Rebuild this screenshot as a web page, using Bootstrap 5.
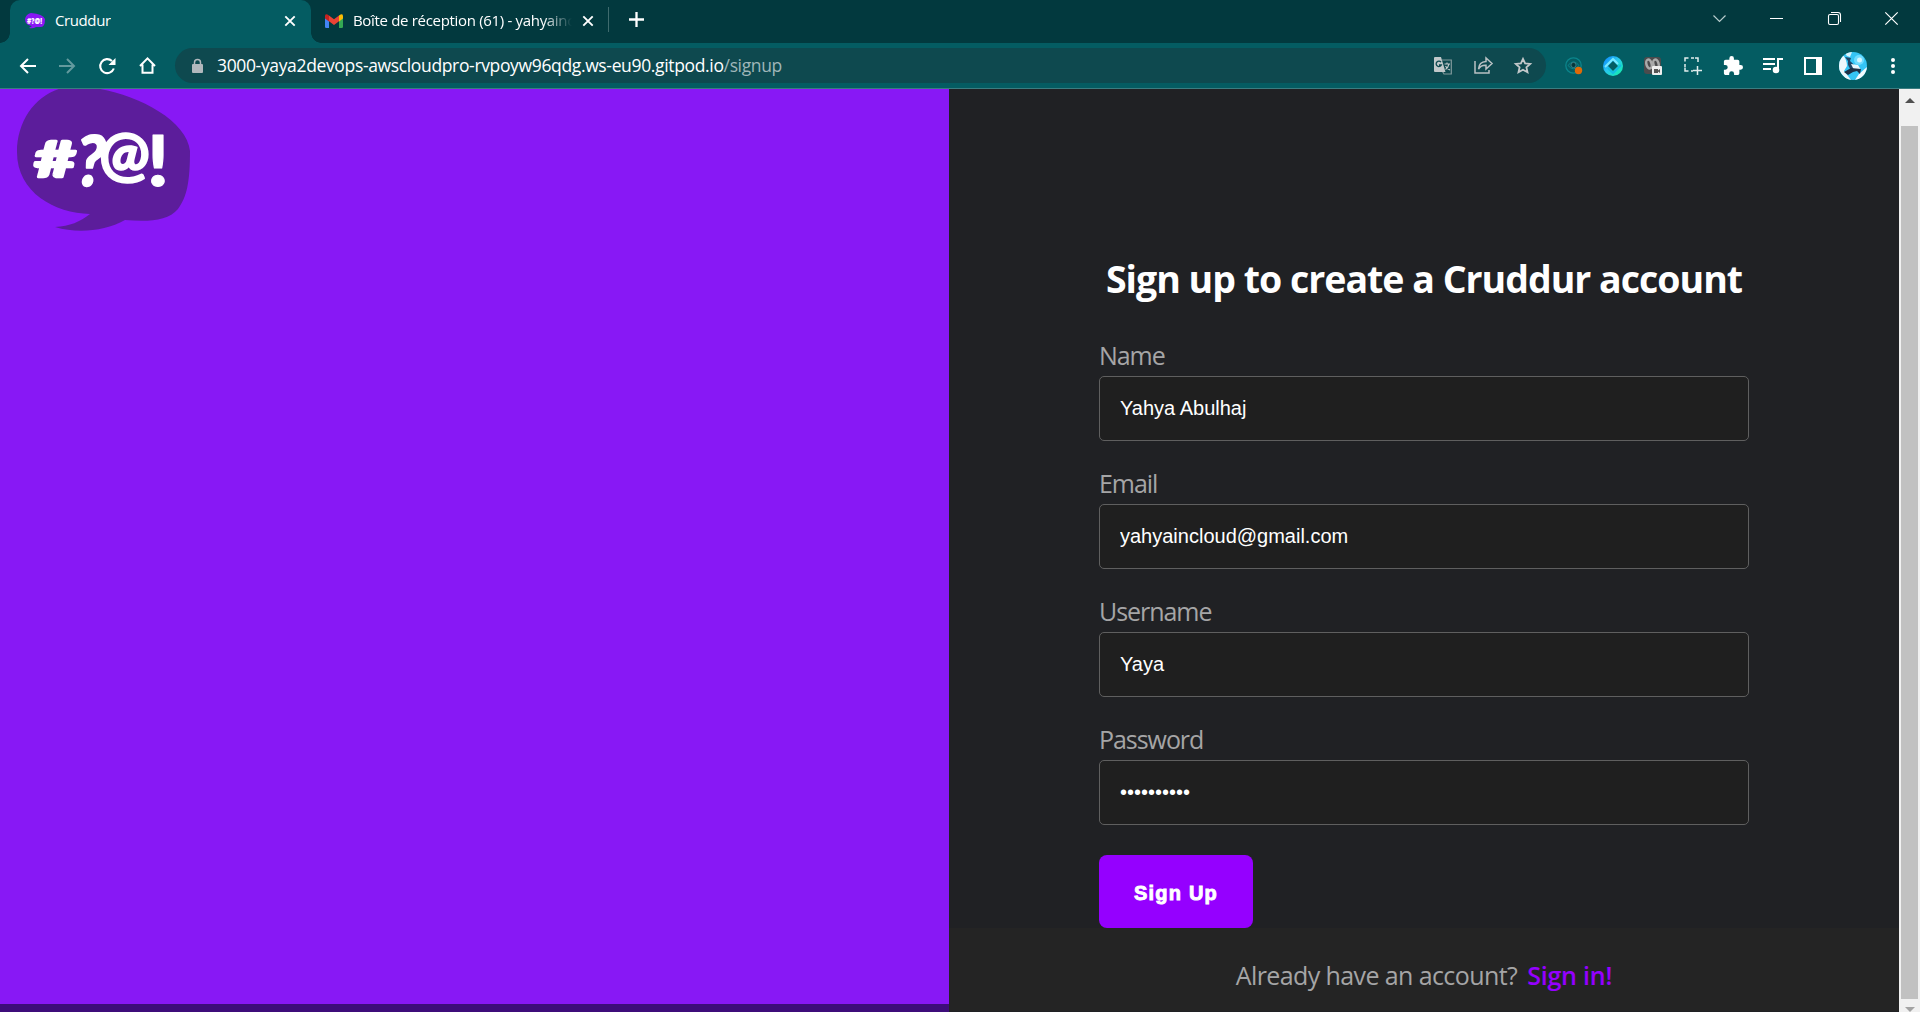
<!DOCTYPE html>
<html lang="en" data-bs-theme="dark">
<head>
<meta charset="utf-8">
<title>Cruddur</title>
<link href="https://cdn.jsdelivr.net/npm/bootstrap@5.3.0/dist/css/bootstrap.min.css" rel="stylesheet">
<style>
  html, body { height: 1012px; margin: 0; overflow: hidden; }
  body { font-family: "Open Sans", "Noto Sans", sans-serif; background: #202124; color: #fff; }
  svg { display: block; flex: none; overflow: visible; }
  .tabstrip { height: 43px; background: #02393e; }
  .tab-active { position: relative; width: 301px; height: 43px; margin-left: 10px; background: #045c62; border-radius: 10px 10px 0 0; padding-left: 15px; padding-right: 14px; padding-bottom: 1px; }
  .tab-active::before, .tab-active::after { content: ""; position: absolute; bottom: 0; width: 10px; height: 10px; }
  .tab-active::before { left: -10px; background: radial-gradient(circle at 0 0, #02393e 9.5px, #045c62 10px); }
  .tab-active::after { right: -10px; background: radial-gradient(circle at 100% 0, #02393e 9.5px, #045c62 10px); }
  .tab-idle { width: 297px; height: 43px; padding-left: 14px; padding-right: 13px; padding-bottom: 2px; }
  .tab-text { font-size: 15px; line-height: 22px; white-space: nowrap; overflow: hidden; margin-bottom: 2px; }
  .tab-one { letter-spacing: -.4px; margin-left: 10px; }
  .tab-two { letter-spacing: -.32px; margin-left: 10px; width: 219px; -webkit-mask-image: linear-gradient(90deg, #000 190px, transparent 219px); mask-image: linear-gradient(90deg, #000 190px, transparent 219px); }
  .tab-rule { width: 1px; height: 25px; background: #3f6b6e; margin-right: 20px; }
  .win-btn { width: 57.3px; height: 37px; display: flex; align-items: center; justify-content: center; }
  .toolbar { height: 46px; background: #045c62; border-bottom: 1px solid #3a7d81; padding: 0 7px; }
  .tool { width: 40px; height: 40px; display: flex; align-items: center; justify-content: center; flex: none; }
  .omnibox { height: 35px; border-radius: 18px; background: #0e494f; margin-left: 8px; margin-right: 7px; padding-left: 17px; padding-right: 3px; }
  .url { font-size: 17.5px; line-height: 24px; margin-left: 14px; margin-bottom: 1px; letter-spacing: -.35px; white-space: nowrap; }
  .url span { color: #9fb6b9; }
  .viewport { height: 923px; }
  .brand-col { width: 949px; }
  .form-pane { width: 950px; height: 923px; background: #202124; }
  .brand-pane { background: #8818f5; height: 915px; }
  .brand-pane svg { margin-left: 17px; }
  .under-pane { height: 8px; background: #3d0d7a; }
  .signup-form { padding: 162px 150px 0; height: 839px; }
  .signup-form h1 { font-size: 37.5px; line-height: 56px; font-weight: 700; letter-spacing: -1px; text-align: center; margin: 0 -20px 29px; white-space: nowrap; color: #fff; }
  .field-label { font-size: 25px; line-height: 38px; height: 40px; letter-spacing: -1.05px; color: #a5a5a6; display: block; }
  .field + .field { margin-top: 23px; }
  .signup-form .form-control { height: 65px; background: #1f1f1f; border: 1px solid #5f5f5f; border-radius: 5px; font: 20px "Liberation Sans", Arial, sans-serif; color: #fff; padding: 0 20px; }
  .signup-btn { width: 154px; height: 73px; margin-top: 30px; background: #9500ff; border: 0; border-radius: 8px; color: #fff; font: 900 20px "Liberation Sans", Arial, sans-serif; -webkit-text-stroke: .9px #fff; letter-spacing: 1.2px; padding: 3px 0 0; }
  .signin-foot { height: 83px; background: #242424; font-size: 25px; line-height: 38px; padding-top: 28px; letter-spacing: -.6px; color: #a5a5a6; white-space: nowrap; }
  .signin-foot a { color: #9500ff; font-weight: 600; text-decoration: none; margin-left: 10px; letter-spacing: -.2px; }
  .scroll-rail { width: 21px; background: #f1f1f1; padding: 9px 2px 0; }
  .scroll-thumb { width: 17px; height: 874px; background: #c1c1c1; margin-top: 23px; }
</style>
<script src="https://cdn.jsdelivr.net/npm/bootstrap@5.3.0/dist/js/bootstrap.bundle.min.js"></script>
</head>
<body>
<header>
  <div class="tabstrip d-flex">
    <div class="tab-active d-flex align-items-center">
      <svg width="20" height="16" viewBox="0 0 20 16"><path d="M6 0Q18 1 20 6Q20 14 16 14L11 14Q8 16 4 15L7 13Q0 12 0 6Q1 1 6 0Z" fill="#8818f5"/><text x="2" y="10.5" font-size="8" font-weight="800" fill="#fff" textLength="15" lengthAdjust="spacingAndGlyphs">#?@!</text></svg>
      <span class="tab-text tab-one">Cruddur</span>
      <svg class="ms-auto" width="14" height="14" viewBox="0 0 14 14" stroke="#fff" stroke-width="1.9"><path d="M2.3 2.3l9.4 9.4M11.7 2.3l-9.4 9.4"/></svg>
    </div>
    <div class="tab-idle d-flex align-items-center">
      <svg width="18" height="14" viewBox="0 0 18 14"><path d="M0 2h4v12H1.2Q0 14 0 12.800Z" fill="#4285f4"/><path d="M14 2h4v10.800Q18 14 16.800 14H14Z" fill="#34a853"/><path d="M14 1.500Q18-1.500 18 2.200V4.500L14 7.500Z" fill="#fbbc04"/><path d="M0 2.200Q0-1.500 4 1.500V7.500L0 4.500Z" fill="#c5221f"/><path d="M4 1.500L9 5.200L14 1.500V7.200L9 11L4 7.200Z" fill="#ea4335"/></svg>
      <span class="tab-text tab-two">Boîte de réception (61) - yahyainc</span>
      <svg class="ms-auto" width="14" height="14" viewBox="0 0 14 14" stroke="#fff" stroke-width="1.9"><path d="M2.3 2.3l9.4 9.4M11.7 2.3l-9.4 9.4"/></svg>
    </div>
    <div class="d-flex align-items-center pb-1"><span class="tab-rule"></span>
      <svg width="15" height="15" viewBox="0 0 15 15" stroke="#fff" stroke-width="2.3"><path d="M0 7.500h15M7.500 0v15"/></svg>
    </div>
    <div class="d-flex ms-auto">
      <div class="win-btn"><svg width="13" height="7" viewBox="0 0 13 7" fill="none" stroke="#b8cccd" stroke-width="1.200"><path d="M.5.5l6 6l6-6"/></svg></div>
      <div class="win-btn"><svg width="13" height="1"><rect width="13" height="1" fill="#fff"/></svg></div>
      <div class="win-btn"><svg width="13" height="13" viewBox="0 0 13 13" fill="none" stroke="#fff" stroke-width="1.100"><rect x=".5" y="2.500" width="10" height="10" rx="1.500"/><path d="M3 .5H10Q12.500.5 12.500 3V10"/></svg></div>
      <div class="win-btn"><svg width="13" height="13" viewBox="0 0 13 13" stroke="#fff" stroke-width="1.200"><path d="M.3.3l12.400 12.400M12.700.3L.3 12.700"/></svg></div>
    </div>
  </div>
  <div class="toolbar d-flex align-items-center">
    <div class="tool"><svg width="17" height="16" viewBox="0 0 17 16" fill="none" stroke="#fff" stroke-width="2"><path d="M17 8H2M9 1L2 8l7 7"/></svg></div>
    <div class="tool"><svg width="17" height="16" viewBox="0 0 17 16" fill="none" stroke="#639a9e" stroke-width="2"><path d="M0 8H15M8 1l7 7l-7 7"/></svg></div>
    <div class="tool"><svg width="18" height="18" viewBox="0 0 18 18" fill="none" stroke="#fff" stroke-width="2.100"><path d="M15.800 11.500A7 7 0 1 1 14 4"/><path d="M17.500 1V8H10.500Z" fill="#fff" stroke="none"/></svg></div>
    <div class="tool"><svg width="17" height="17" viewBox="0 0 17 17" fill="none" stroke="#fff" stroke-width="2"><path d="M1 9L8.500 1.400L16 9M3.500 7.500V15.800H13.500V7.500"/></svg></div>
    <div class="omnibox d-flex align-items-center flex-fill">
      <svg width="11" height="14" viewBox="0 0 11 14"><rect y="5" width="11" height="9" rx="1" fill="#b1b8bd"/><path d="M2.500 6V3.500a3 3 0 0 1 6 0V6" fill="none" stroke="#b1b8bd" stroke-width="1.500"/></svg>
      <div class="url">3000-yaya2devops-awscloudpro-rvpoyw96qdg.ws-eu90.gitpod.io<span>/signup</span></div>
      <div class="d-flex ms-auto">
        <div class="tool"><svg width="18" height="18" viewBox="0 0 18 18"><path d="M8 3h9.300v14H10L7 12" fill="none" stroke="#81999c" stroke-width="1.200"/><path d="M1 0H7L11.500 15H1Q0 15 0 14V1Q0 0 1 0Z" fill="#c1c8ca"/><path d="M7 5.200A2.700 2.700 0 1 0 7.300 8H5" fill="none" stroke="#0e494f" stroke-width="1.300"/><path d="M10.500 7H16M13 5.500V7M15 7Q14 11 11.500 12.500M11.500 9Q13 12 16 13" fill="none" stroke="#c1c8ca" stroke-width="1.100"/></svg></div>
        <div class="tool"><svg width="19" height="17" viewBox="0 0 19 17" fill="none" stroke="#b9c1c4" stroke-width="1.500"><path d="M1 4V16H15V13"/><path d="M4.500 12Q5 5 12 4.600V1L18 6.500L12 12V8.300Q7 8 4.500 12Z"/></svg></div>
        <div class="tool"><svg width="18" height="17" viewBox="0 0 18 17" fill="none" stroke="#c3c8ca" stroke-width="1.800"><path d="M9 1.800L11.100 6.400L16.200 6.900L12.400 10.300L13.500 15.300L9 12.700L4.500 15.300L5.600 10.300L1.800 6.900L6.900 6.400Z"/></svg></div>
      </div>
    </div>
    <div class="tool"><svg width="17" height="17" viewBox="0 0 17 17" fill="none"><circle cx="8.500" cy="8.500" r="7.700" stroke="#0b858c" stroke-width="1.300"/><path d="M3 8.500Q8.500 1 14 8.500Q8.500 15 3 8.500Z" stroke="#0b858c"/><circle cx="8.500" cy="8" r="2.600" fill="#06373c" stroke="#3b8085"/><circle cx="13.500" cy="13.500" r="3.700" fill="#e06a08"/></svg></div>
    <div class="tool"><svg width="20" height="20" viewBox="0 0 20 20"><defs><linearGradient id="ringTone" x1="0" y1="0" x2="1" y2="1"><stop offset="0" stop-color="#087cff"/><stop offset=".45" stop-color="#28c8ee"/><stop offset="1" stop-color="#10f5a0"/></linearGradient></defs><circle cx="10" cy="10" r="10" fill="url(#ringTone)"/><path d="M2 11L10 3L15 8" fill="none" stroke="#7ae8ff" stroke-width="2"/><path d="M18 9L10 17L5 12" fill="none" stroke="#12bde0" stroke-width="2"/><path d="M10 5L15 10L10 15L5 10Z" fill="#045c62"/></svg></div>
    <div class="tool"><svg width="18" height="18" viewBox="0 0 18 18"><rect width="17" height="17" rx="3" fill="#4b4b4d"/><g fill="none" stroke="#aaa" stroke-width="2.500"><ellipse cx="5" cy="7" rx="2.600" ry="4.500" transform="rotate(-15 5 7)"/><ellipse cx="12" cy="7" rx="2.600" ry="4.500" transform="rotate(-15 12 7)"/></g><rect x="8" y="9" width="10" height="9" rx="1" fill="#eee"/><path d="M10 12h4v1.500l2-1.500v4l-2-1.500V16h-4Z" fill="#555"/></svg></div>
    <div class="tool"><svg width="18" height="18" viewBox="0 0 18 18" fill="none" stroke="#e1eded" stroke-width="1.500"><path d="M1 4.500V1H4.500M7 1h3M11 1h3V5M1 7v3.500M1 11V14H4.500M7 14H9M9 13.500H18M13.500 9V18"/></svg></div>
    <div class="tool"><svg width="20" height="20" viewBox="1 1 22 22" fill="#fff"><path d="M20.500 11H19V7c0-1.100-.9-2-2-2h-4V3.500a2.500 2.500 0 0 0-5 0V5H4c-1.100 0-2 .9-2 2v3.800h1.500a2.700 2.700 0 0 1 0 5.400H2V20c0 1.100.9 2 2 2h3.800v-1.500a2.700 2.700 0 0 1 5.400 0V22H17c1.100 0 2-.9 2-2v-4h1.500a2.500 2.500 0 0 0 0-5Z"/></svg></div>
    <div class="tool"><svg width="20" height="17" viewBox="0 0 20 17" fill="none" stroke="#fff" stroke-width="2"><path d="M0 2H12M0 7H12M0 12H8M15 13V2H20"/><circle cx="13" cy="13" r="2.300" fill="#fff"/></svg></div>
    <div class="tool"><svg width="18" height="18" viewBox="0 0 18 18"><path d="M0 0H18V18H0ZM2 2V16H12V2Z" fill="#fff" fill-rule="evenodd"/></svg></div>
    <div class="tool"><svg width="28" height="28" viewBox="0 0 28 28"><defs><clipPath id="roundFace"><circle cx="14" cy="14" r="14"/></clipPath></defs><g clip-path="url(#roundFace)"><rect width="28" height="28" fill="#35c5f5"/><path d="M0 6L4 3Q8 8 8 14L5 19L9 24L12 28H8L0 19Z" fill="#eef8fc"/><path d="M5 0H13L11 5L8 4Z" fill="#d9f3fc"/><path d="M16 28L20 22L28 15V28Z" fill="#f4fbff"/><circle cx="20" cy="8" r="5" fill="#6fdcff"/><circle cx="20.500" cy="8" r="2.500" fill="#d4f6ff"/><path d="M6 5L12 6L11 9Q16 13 17 17L13 19Q8 14 9 9Z" fill="#1f4668"/><path d="M12 12L19 13L22 18L15 18Z" fill="#eaf6fc"/><path d="M5 20L12 16L22 17L21 22L18 19L14 20L9 23Z" fill="#1d3046"/></g></svg></div>
    <div class="tool"><svg width="4" height="16" viewBox="0 0 4 16" fill="#fff"><circle cx="2" cy="2" r="2"/><circle cx="2" cy="8" r="2"/><circle cx="2" cy="14" r="2"/></svg></div>
  </div>
</header>
<main class="viewport d-flex">
    <section class="brand-col flex-shrink-0">
      <div class="brand-pane overflow-hidden">
        <svg width="173" height="143" viewBox="17 89 173 143">
          <path d="M62 88Q74 86 100 89C140 96 187 121 190 151C190 182 187 197 178 209C168 221 148 222 125 220C105 231 78 234 55 227C70 226 80 222 90 214C55 213 17 193 17 152C17 120 36 95 62 88Z" fill="#5c1d9b"/>
          <g fill="#fff" stroke="#fff" stroke-linejoin="round" font-family="Lato, sans-serif" font-weight="900">
            <text x="34" y="177" font-size="50" stroke-width="2.500" textLength="42" lengthAdjust="spacingAndGlyphs">#</text>
            <text transform="translate(74 186) skewX(-7)" x="0" y="0" font-size="70" stroke-width="1.500" textLength="29" lengthAdjust="spacingAndGlyphs">?</text>
            <text x="99" y="176" font-size="60" stroke-width="1.500" textLength="51" lengthAdjust="spacingAndGlyphs">@</text>
            <text x="147" y="186" font-size="70" stroke-width="1" textLength="22" lengthAdjust="spacingAndGlyphs">!</text>
          </g>
        </svg>
      </div>
      <div class="under-pane"></div>
    </section>
    <section class="form-pane flex-shrink-0">
      <form class="signup-form">
        <h1>Sign up to create a Cruddur account</h1>
        <div class="field"><label class="field-label" for="fullName">Name</label><input id="fullName" class="form-control" type="text" value="Yahya Abulhaj"></div>
        <div class="field"><label class="field-label" for="email">Email</label><input id="email" class="form-control" type="text" value="yahyaincloud@gmail.com"></div>
        <div class="field"><label class="field-label" for="userName">Username</label><input id="userName" class="form-control" type="text" value="Yaya"></div>
        <div class="field"><label class="field-label" for="pass">Password</label><input id="pass" class="form-control" type="text" value="••••••••••"></div>
        <button class="btn signup-btn" type="button">Sign Up</button>
      </form>
      <div class="signin-foot d-flex justify-content-center"><span>Already have an account?</span><a href="#">Sign in!</a></div>
    </section>
  <div class="scroll-rail d-flex flex-column align-items-center">
    <svg width="10" height="5"><path d="M0 5L5 0L10 5Z" fill="#505050"/></svg>
    <div class="scroll-thumb"></div>
    <svg class="mt-2" width="10" height="5"><path d="M0 0H10L5 5Z" fill="#a3a3a3"/></svg>
  </div>
</main>
</body>
</html>
